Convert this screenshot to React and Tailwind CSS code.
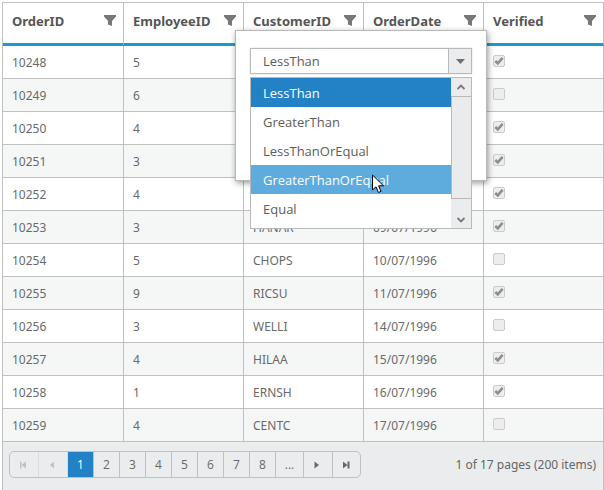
import React from "react";

const columns = ["OrderID", "EmployeeID", "CustomerID", "OrderDate", "Verified"];

const orders = [
  [10248, 5, "VINET", "04/07/1996", true],
  [10249, 6, "TOMSP", "05/07/1996", false],
  [10250, 4, "HANAR", "08/07/1996", true],
  [10251, 3, "VICTE", "08/07/1996", true],
  [10252, 4, "SUPRD", "09/07/1996", true],
  [10253, 3, "HANAR", "09/07/1996", true],
  [10254, 5, "CHOPS", "10/07/1996", false],
  [10255, 9, "RICSU", "11/07/1996", true],
  [10256, 3, "WELLI", "14/07/1996", false],
  [10257, 4, "HILAA", "15/07/1996", true],
  [10258, 1, "ERNSH", "16/07/1996", true],
  [10259, 4, "CENTC", "17/07/1996", false],
];

const operators = ["LessThan", "GreaterThan", "LessThanOrEqual", "GreaterThanOrEqual", "Equal"];

function Funnel() {
  return (
    <svg width="12" height="12" viewBox="0 0 12 12" fill="#777" aria-hidden="true">
      <path d="M0 0H12V1.5L8 6V11L4 9.5V6L0 1.5Z" />
    </svg>
  );
}

function HeaderCell({ name }) {
  return (
    <th className="h-[43px] border-r border-b-3 border-r-[#c0c0c0] border-b-[#179bd7] p-0 text-left align-top font-bold first:w-[121px]">
      <div className="flex items-center justify-between pt-1.5 pr-[7px] pl-[9px]">
        <span className="text-[13px] leading-6 text-[#555]">{name}</span>
        <button type="button" aria-label={"Filter " + name}>
          <Funnel />
        </button>
      </div>
    </th>
  );
}

function Verified({ checked, id }) {
  return (
    <span className="grid h-3 w-3 items-center">
      <input
        type="checkbox"
        disabled
        checked={checked}
        readOnly
        aria-label={"Order " + id + " verified"}
        className="col-start-1 row-start-1 h-3 w-3 appearance-none rounded-[2px] border border-[#cbcbcb] bg-[#ededed]"
      />
      {checked && (
        <svg className="col-start-1 row-start-1" width="12" height="12" viewBox="0 0 12 12" fill="none" stroke="#8e8e8e" strokeWidth="2.6" aria-hidden="true">
          <path d="M2.3 6L4.8 8.4L9.6 2.8" />
        </svg>
      )}
    </span>
  );
}

function FilterPopup() {
  return (
    <div className="absolute top-[30px] left-[235px] h-[151px] w-[252px] border border-[#b8b8b8] bg-white px-3.5 pt-[17px] shadow-[1px_2px_6px_rgba(0,0,0,0.4)]">
      <div className="grid h-[26px] grid-cols-1 border border-[#b9b9b9] shadow-[0_0_2px_rgba(0,0,0,0.15)]">
        <select
          aria-label="Filter operator"
          defaultValue="LessThan"
          className="col-start-1 row-start-1 w-full appearance-none bg-white pl-3 text-[13px] leading-6 text-[#5c5c5c]"
        >
          {operators.map((o) => (
            <option key={o}>{o}</option>
          ))}
        </select>
        <span className="pointer-events-none col-start-1 row-start-1 flex w-[23px] items-center justify-center justify-self-end border-l border-[#b9b9b9] bg-[#eaecee]">
          <svg width="9" height="5" viewBox="0 0 9 5" fill="#707070" aria-hidden="true">
            <path d="M0 0H9L4.5 5Z" />
          </svg>
        </span>
      </div>
      <div className="mt-[3px] flex h-[152px] border border-[#b9b9b9] bg-white">
        <ul role="listbox" aria-label="Operators" className="flex-1 text-[13px] leading-[31px] text-[#5c5c5c]">
          <li role="option" aria-selected="true" className="h-[29px] bg-[#2381c5] pl-3 text-white">LessThan</li>
          <li role="option" aria-selected="false" className="h-[29px] pl-3">GreaterThan</li>
          <li role="option" aria-selected="false" className="h-[29px] pl-3">LessThanOrEqual</li>
          <li role="option" aria-selected="false" className="h-[29px] bg-[#5eabde] pl-3 text-white">GreaterThanOrEqual</li>
          <li role="option" aria-selected="false" className="h-[29px] pl-3">Equal</li>
        </ul>
        <div className="flex w-5 flex-col bg-[#eaecee]">
          <span className="flex h-[18px] items-center justify-center">
            <svg width="8" height="6" viewBox="0 0 8 6" fill="none" stroke="#777" strokeWidth="1.8" aria-hidden="true">
              <path d="M0.5 5L4 1.5L7.5 5" />
            </svg>
          </span>
          <span className="h-[103px] border border-r-0 border-[#b9b9b9] bg-[#e9ebed]" />
          <span className="flex flex-1 items-center justify-center pt-3">
            <svg width="8" height="6" viewBox="0 0 8 6" fill="none" stroke="#777" strokeWidth="1.8" aria-hidden="true">
              <path d="M0.5 1L4 4.5L7.5 1" />
            </svg>
          </span>
        </div>
      </div>
    </div>
  );
}

function PagerArrow({ label, disabled, d, last }) {
  return (
    <button
      type="button"
      aria-label={label}
      disabled={disabled}
      className={
        "flex items-center justify-center pr-0.5 " +
        (disabled
          ? "w-[29px] border-r border-[#dadcde] text-[#bfc1c3]"
          : last
            ? "w-[27px] text-[#686868]"
            : "w-[29px] border-r border-[#c0c0c0] text-[#686868]")
      }
    >
      <svg width="8" height="8" viewBox="0 0 8 8" fill="currentColor" aria-hidden="true">
        <path d={d} />
      </svg>
    </button>
  );
}

function Pager() {
  return (
    <div className="flex items-start justify-between pt-[9px] pr-[7px] pb-3 pl-1.5">
      <nav aria-label="Pages" className="flex h-[27px] overflow-hidden rounded-[5px] border border-[#c0c0c0] text-[12px] text-[#686868]">
        <PagerArrow label="First page" disabled d="M1 0.5H2.5V7.5H1ZM7 0.5V7.5L2.5 4Z" />
        <PagerArrow label="Previous page" disabled d="M6 0.5V7.5L2 4Z" />
        {[1, 2, 3, 4, 5, 6, 7, 8].map((n) => (
          <button
            key={n}
            type="button"
            className={"w-[26px] border-r border-[#c0c0c0] " + (n === 1 ? "bg-[#2381c5] text-white" : "")}
          >
            {n}
          </button>
        ))}
        <button type="button" className="w-7 border-r border-[#c0c0c0]">...</button>
        <PagerArrow label="Next page" d="M1.5 0.5V7.5L6 4Z" />
        <PagerArrow label="Last page" last d="M1 0.5V7.5L5.5 4ZM5.5 0.5H7.5V7.5H5.5Z" />
      </nav>
      <p className="font-['Noto_Sans',sans-serif] text-[12px] leading-[27px] text-[#666]">1 of 17 pages (200 items)</p>
    </div>
  );
}

export default function App() {
  return (
    <main className="relative min-h-screen bg-white pt-0.5 pl-0.5 font-['Open_Sans',sans-serif]">
      <div className="border-t border-l border-[#c0c0c0]">
        <table className="w-full table-fixed border-separate border-spacing-0 font-['Noto_Sans',sans-serif]">
          <thead>
            <tr>
              {columns.map((c) => (
                <HeaderCell key={c} name={c} />
              ))}
            </tr>
          </thead>
          <tbody className="text-[12px] text-[#6a6a6a]">
            {orders.map((row) => (
              <tr key={row[0]} className="h-[33px] even:bg-[#f5f7f6]">
                {row.map((v, i) =>
                  typeof v === "boolean" ? (
                    <td key={i} className="border-r border-b border-[#c0c0c0] p-0 pb-0.5 pl-[9px]">
                      <Verified checked={v} id={row[0]} />
                    </td>
                  ) : (
                    <td key={i} className="border-r border-b border-[#c0c0c0] p-0 pt-0.5 pl-[9px]">
                      {v}
                    </td>
                  ),
                )}
              </tr>
            ))}
          </tbody>
        </table>
        <footer className="border-r border-[#c0c0c0] bg-[#eaecee]">
          <Pager />
        </footer>
      </div>
      <FilterPopup />
      <svg className="absolute top-[174px] left-[372px]" width="13" height="20" viewBox="0 0 13 20" fill="#fff" stroke="#000" aria-hidden="true">
        <path d="M0.5 1V16L4 12.8L6.5 18.5L9 17.3L6.6 11.8H11.5Z" />
      </svg>
    </main>
  );
}
